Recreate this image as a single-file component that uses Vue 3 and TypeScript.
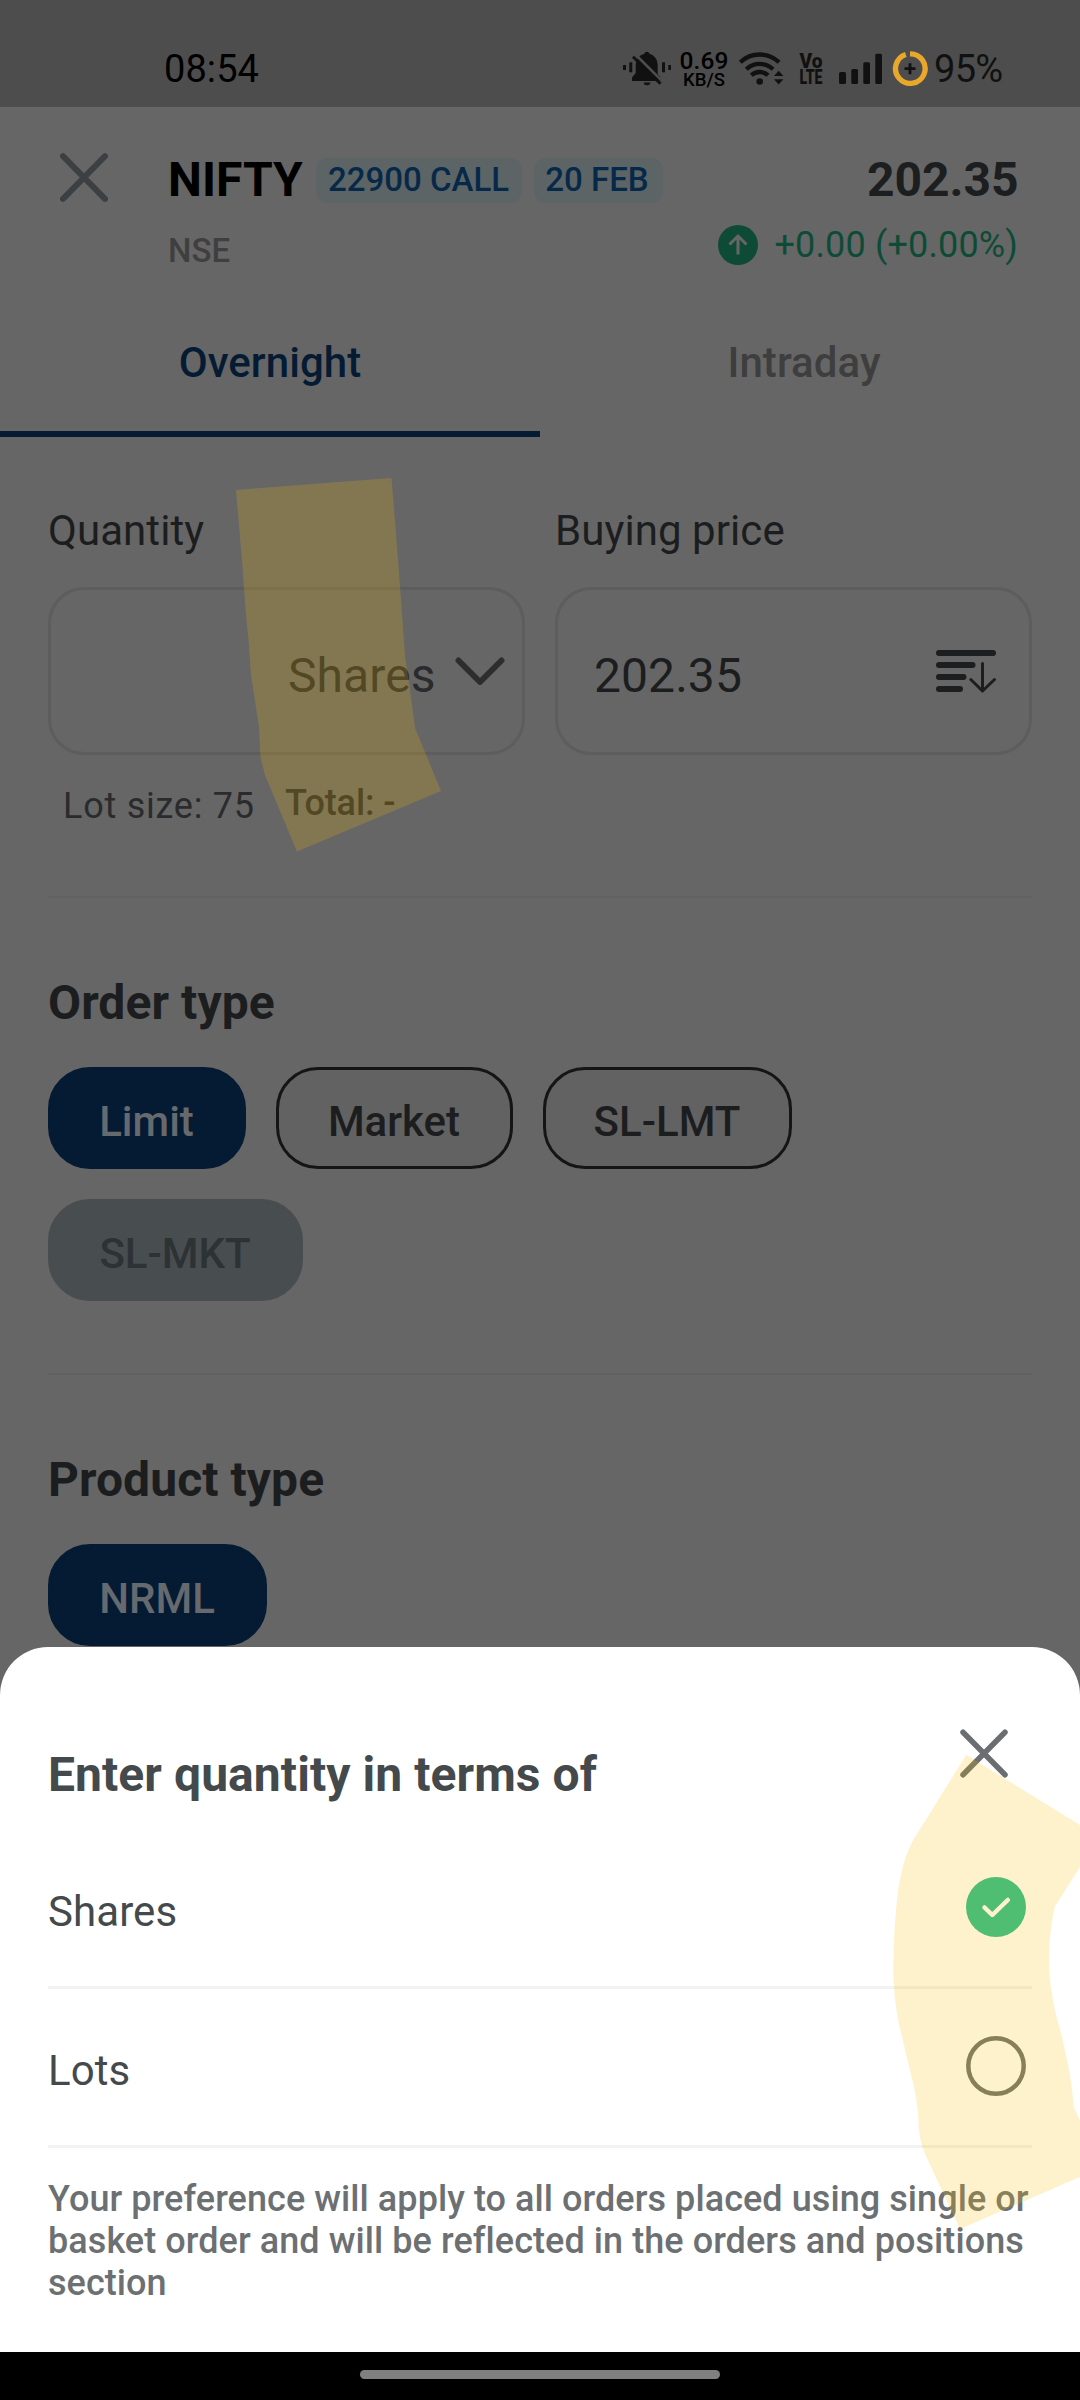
<script setup lang="ts">
import { ref } from 'vue'

interface Chip {
  label: string
  state: 'active' | 'outline' | 'disabled'
  width: number
}

const orderTypes: Chip[] = [
  { label: 'Limit', state: 'active', width: 198 },
  { label: 'Market', state: 'outline', width: 237 },
  { label: 'SL-LMT', state: 'outline', width: 249 },
  { label: 'SL-MKT', state: 'disabled', width: 255 },
]
const productTypes: Chip[] = [{ label: 'NRML', state: 'active', width: 219 }]

const units = ['Shares', 'Lots']
const unit = ref('Shares')
</script>

<template>
  <div class="screen">
    <div class="status">
      <span class="clock">08:54</span>
      <div class="status-icons">
        <svg class="bell" width="48" height="37" viewBox="623 50 48 37" fill="#111">
          <rect x="623" y="65" width="3" height="5" />
          <rect x="629.3" y="62.3" width="3" height="10" />
          <rect x="662" y="62.3" width="3" height="10" />
          <rect x="668.3" y="65" width="3" height="5" />
          <path d="M632 81v-3.5l3.700-4.500v-8a11.200 11.200 0 0 1 8.600-11.200a2.700 2.700 0 0 1 5.200 0a11.200 11.200 0 0 1 8.200 11.200v9l3 4v3z" />
          <path d="M643.800 82.500h6.400a3.200 2.700 0 0 1-6.400 0z" />
          <path d="M634.500 53.500l29 29" stroke="#4d4d4d" stroke-width="2.500" />
          <path d="M633 56.800l27.500 27" stroke="#111" stroke-width="3" />
        </svg>
        <div class="speed">
          <span class="rate">0.69</span>
          <span class="rate-unit">KB/S</span>
        </div>
        <svg class="wifi" width="46" height="37" viewBox="738 50 46 37" fill="none" stroke="#111" stroke-width="4.300">
          <path d="M740.300 62.300a28 28 0 0 1 38.800 0" />
          <path d="M746.300 69.300a19.500 19.500 0 0 1 26.800 0" />
          <path d="M751.300 75.300a12.300 12.300 0 0 1 16.800 0" />
          <circle cx="759.700" cy="81.500" r="3.300" fill="#111" stroke="none" />
          <path d="M774 76l4.700-5.300 4.700 5.300zM774 79.300l4.700 5.300 4.700-5.300z" fill="#111" stroke="none" />
        </svg>
        <svg class="volte" width="24" height="37" viewBox="799 50 24 37" fill="#111" font-family="Roboto, sans-serif" font-weight="900">
          <text x="799.500" y="67.700" font-size="19.500" textLength="23" lengthAdjust="spacingAndGlyphs">Vo</text>
          <text x="799.500" y="83.700" font-size="19.500" textLength="23" lengthAdjust="spacingAndGlyphs">LTE</text>
        </svg>
        <svg class="signal" width="44" height="37" viewBox="839 50 44 37" fill="#111">
          <rect x="839" y="72" width="7" height="12" rx="1.500" />
          <rect x="851.300" y="69" width="6.700" height="15" rx="1.500" />
          <rect x="863.300" y="62.300" width="6.700" height="21.700" rx="1.500" />
          <rect x="875.300" y="53.700" width="6.700" height="30.300" rx="1.500" />
        </svg>
        <svg class="battery" width="36" height="37" viewBox="892.400 50 36 37" fill="none">
          <path d="M910.400 53.800a14.800 14.800 0 1 1-4.200.7" stroke="#e8a82b" stroke-width="5.300" />
          <path d="M904.900 68.700h11M910.400 63.200v11" stroke="#111" stroke-width="2.800" />
        </svg>
        <span class="percent">95%</span>
      </div>
    </div>

    <header class="header">
      <svg class="close" width="48" height="49" viewBox="0 0 48 49">
        <path d="M3 3.200l42 42.600M45 3.200l-42 42.600" stroke="#3c4042" stroke-width="6" stroke-linecap="round" />
      </svg>
      <div class="instrument">
        <div class="name-row">
          <span class="name">NIFTY</span>
          <span class="tag strike">22900 CALL</span>
          <span class="tag expiry">20 FEB</span>
        </div>
        <div class="exchange">NSE</div>
      </div>
      <div class="quote">
        <div class="ltp">202.35</div>
        <div class="change">
          <svg width="40" height="40" viewBox="0 0 40 40">
            <circle cx="20" cy="20" r="20" fill="#0e4b37" />
            <path d="M20 29.500v-18M11.500 19.500l8.500-8.500 8.500 8.500" fill="none" stroke="#666" stroke-width="3" />
          </svg>
          <span>+0.00 (+0.00%)</span>
        </div>
      </div>
    </header>

    <nav class="tabs">
      <div class="tab selected"><span>Overnight</span></div>
      <div class="tab idle"><span>Intraday</span></div>
    </nav>

    <main class="content">
      <div class="fields">
        <div class="field">
          <div class="label">Quantity</div>
          <div class="box quantity">
            <span class="unit">Shares</span>
            <svg width="50" height="28" viewBox="0 0 50 28">
              <path d="M3.500 3.500l21.500 21.500 21.500-21.500" fill="none" stroke="#2b2d2e" stroke-width="6" stroke-linecap="round" stroke-linejoin="round" />
            </svg>
          </div>
          <div class="hints">
            <span class="lot">Lot size: 75</span>
            <span class="total">Total: -</span>
          </div>
        </div>
        <div class="field">
          <div class="label">Buying price</div>
          <div class="box price">
            <span>202.35</span>
            <svg width="60" height="43" viewBox="0 0 60 43" fill="none" stroke="#1c1e1f" stroke-linecap="round">
              <path d="M3 3h54M3 15h33.500M3 27h24.500M3 39h21" stroke-width="6" />
              <path d="M46.500 13.500v26.500M34.800 29.500l11.700 11.500 12-11.500" stroke-width="3" stroke-linejoin="round" />
            </svg>
          </div>
        </div>
      </div>

      <hr class="rule first" />
      <h2 class="section order">Order type</h2>
      <div class="chips">
        <div v-for="c in orderTypes" :key="c.label" class="chip" :class="c.state" :style="{ width: c.width + 'px' }">
          {{ c.label }}
        </div>
      </div>

      <hr class="rule" />
      <h2 class="section">Product type</h2>
      <div class="chips">
        <div v-for="c in productTypes" :key="c.label" class="chip" :class="c.state" :style="{ width: c.width + 'px' }">
          {{ c.label }}
        </div>
      </div>
    </main>

    <section class="sheet">
      <div class="sheet-head">
        <h2>Enter quantity in terms of</h2>
        <svg class="sheet-close" width="48" height="49" viewBox="0 0 48 49">
          <path d="M3 3.200l42 42.600M45 3.200l-42 42.600" stroke="#6a6e71" stroke-width="5.500" stroke-linecap="round" />
        </svg>
      </div>
      <div v-for="u in units" :key="u" class="option" @click="unit = u">
        <span>{{ u }}</span>
        <svg width="60" height="60" viewBox="0 0 60 60" fill="none">
          <template v-if="unit === u">
            <circle cx="30" cy="30" r="30" fill="#25bf90" />
            <path d="M18.500 30.500l7.800 7.500 15.500-15" stroke="#fff" stroke-width="4.500" stroke-linecap="round" stroke-linejoin="round" />
          </template>
          <circle v-else cx="30" cy="30" r="27.700" stroke="#6a7070" stroke-width="4.500" />
        </svg>
      </div>
      <p class="note">Your preference will apply to all orders placed using single or basket order and will be reflected in the orders and positions section</p>
    </section>

    <div class="navbar"><div class="handle"></div></div>

    <!-- highlighter strokes drawn over the whole screen -->
    <svg class="marker" width="1080" height="2400" viewBox="0 0 1080 2400" fill="#fcc000" fill-opacity="0.200">
      <path d="M236 490L391.500 478L398 560L401 600L405 656L410 690L415 728L441 791L297 851.500L265 775L260.500 757L259 727L251 675L248.500 640L246 615L242 560z" />
      <path d="M966.300 1754.800L1080 1825V1867L1054.700 1907Q1046 1945 1050.700 1986Q1053 2005 1058 2022Q1072 2075 1073.700 2107L1080 2120.500V2177L960 2229L925 2154Q918 2136 918.500 2120Q918 2105 913 2083L898.700 2023Q893 1995 893.300 1962Q894 1925 897.300 1897Q902 1858 915 1837Z" />
    </svg>
  </div>
</template>

<style>
body {
  margin: 0;
}
</style>

<style scoped>
.screen {
  position: relative;
  width: 1080px;
  height: 2400px;
  overflow: hidden;
  background: #666;
  color: #1c1d1e;
  font-family: Roboto, sans-serif;
  font-size: 42px;
  line-height: 50px;
  letter-spacing: 0.070px;
}
svg {
  display: block;
  flex: none;
}
.status {
  box-sizing: border-box;
  height: 107px;
  padding: 50px 78px 0 164px;
  display: flex;
  justify-content: space-between;
  background: #4d4d4d;
}
.clock,
.percent {
  font-size: 38px;
  line-height: 39px;
  color: #000;
}
.status-icons {
  display: flex;
}
.speed {
  display: flex;
  flex-direction: column;
  align-items: center;
  width: 50px;
  margin-left: 8px;
  box-sizing: border-box;
  color: #000;
  font-weight: 500;
  white-space: nowrap;
}
.rate {
  font-size: 24.500px;
  line-height: 22px;
}
.rate-unit {
  font-size: 18.500px;
  line-height: 16px;
}
.volte {
  overflow: visible;
  margin-left: 15px;
  letter-spacing: 0;
}
.wifi {
  margin-left: 9px;
}
.signal {
  margin-left: 16px;
}
.battery {
  margin-left: 9.400px;
}
.percent {
  width: 68px;
  margin-left: 5.600px;
  color: #111;
  letter-spacing: -0.7px;
  white-space: nowrap;
}
.header {
  box-sizing: border-box;
  height: 183px;
  padding: 45px 62px 0 60px;
  display: flex;
  align-items: flex-start;
}
.close {
  margin-top: 1px;
}
.instrument {
  margin-left: 60px;
}
.name-row {
  display: flex;
  align-items: flex-start;
}
.name {
  font-size: 48px;
  line-height: 56px;
  font-weight: 700;
  color: #000;
  width: 147.500px;
}
.tag {
  box-sizing: border-box;
  margin-top: 6px;
  height: 45px;
  border-radius: 12px;
  background: #5c6465;
  color: #06294a;
  font-size: 33px;
  line-height: 43px;
  font-weight: 500;
  text-align: center;
  white-space: nowrap;
  letter-spacing: 0;
}
.strike {
  width: 206px;
}
.expiry {
  width: 129px;
  margin-left: 12px;
  padding-right: 2px;
}
.exchange {
  margin-top: 23px;
  font-size: 33px;
  line-height: 40px;
  font-weight: 500;
  color: #3f3f3f;
}
.quote {
  flex: 1;
  display: flex;
  flex-direction: column;
  align-items: flex-end;
}
.ltp {
  font-size: 48px;
  line-height: 56px;
  font-weight: 700;
  letter-spacing: 0;
  margin-right: -0.5px;
  color: #1c1e1f;
}
.change {
  display: flex;
  align-items: center;
  margin-top: 16px;
  gap: 17px;
  font-size: 36px;
  line-height: 42px;
  letter-spacing: 0.150px;
  color: #0e4b37;
}
.tabs {
  display: flex;
  height: 147px;
}
.tab {
  box-sizing: border-box;
  flex: 1 1 0;
  padding-top: 48px;
  text-align: center;
  font-weight: 500;
  color: #3e3e3e;
}
.tab.selected {
  color: #051b33;
  border-bottom: 6px solid #051b33;
}
.tab.idle span {
  margin-right: 12px;
}
.content {
  padding: 69px 48px 0;
}
.fields {
  display: flex;
  gap: 30px;
}
.field {
  flex: 1;
}
.box {
  box-sizing: border-box;
  height: 168px;
  margin-top: 31px;
  border: 3px solid #5d5d5d;
  border-radius: 36px;
  display: flex;
  align-items: center;
  font-size: 48px;
  line-height: 56px;
}
.quantity {
  justify-content: flex-end;
  padding-right: 17px;
  color: #2a2b2d;
}
.quantity span,
.price span {
  padding-top: 9px;
}
.quantity svg {
  margin-left: 19.500px;
}
.price {
  justify-content: space-between;
  padding: 0 33px 0 36px;
}
.hints {
  display: flex;
  margin-top: 27px;
  padding-left: 15px;
  font-size: 36px;
  line-height: 42px;
  color: #2a2b2d;
}
.lot {
  width: 222px;
  padding-top: 3px;
  letter-spacing: 0.750px;
}
.total {
  font-weight: 500;
  letter-spacing: -0.1px;
}
.rule {
  height: 2px;
  border: 0;
  margin: 72px 0 0;
  background: #616161;
}
.rule.first {
  margin-top: 69px;
}
.section {
  margin: 77px 0 0;
  font-size: 48px;
  line-height: 56px;
  font-weight: 700;
}
.chips {
  display: flex;
  flex-wrap: wrap;
  gap: 30px;
  margin-top: 36px;
}
.chip {
  box-sizing: border-box;
  height: 102px;
  border-radius: 42px;
  border: 3px solid transparent;
  padding: 27px 1px 0 0;
  text-align: center;
  font-weight: 500;
  letter-spacing: 0;
}
.active {
  background: #051b33;
  border-color: #051b33;
  color: #666a6e;
}
.outline {
  background: #626262;
  border-color: #141515;
}
.disabled {
  background: #484d50;
  border-color: #484d50;
  color: #2d3235;
}
.sheet {
  position: absolute;
  left: 0;
  right: 0;
  bottom: 48px;
  box-sizing: border-box;
  height: 705px;
  padding: 0 48px;
  border-radius: 48px 48px 0 0;
  background: #fff;
  color: #444a4c;
}
.sheet-head {
  display: flex;
  justify-content: space-between;
  height: 183px;
}
.sheet-head h2 {
  margin: 100px 0 0;
  font-size: 48px;
  line-height: 56px;
  font-weight: 700;
}
.sheet-close {
  margin: 82px 24px 0 0;
}
.option {
  box-sizing: border-box;
  height: 159px;
  border-bottom: 3px solid #f2f2f2;
  padding: 0 6px 2px 0;
  display: flex;
  align-items: center;
  justify-content: space-between;
}
.option span {
  padding-top: 10px;
}
.note {
  margin: 30px -10px 0 0;
  font-size: 36px;
  line-height: 42px;
  font-weight: 500;
  color: #6c7072;
}
.navbar {
  position: absolute;
  left: 0;
  right: 0;
  bottom: 0;
  height: 48px;
  display: flex;
  justify-content: center;
  background: #000;
}
.handle {
  width: 360px;
  height: 9px;
  margin-top: 18px;
  border-radius: 5px;
  background: #808080;
}
.marker {
  position: absolute;
  left: 0;
  top: 0;
  pointer-events: none;
}
</style>
